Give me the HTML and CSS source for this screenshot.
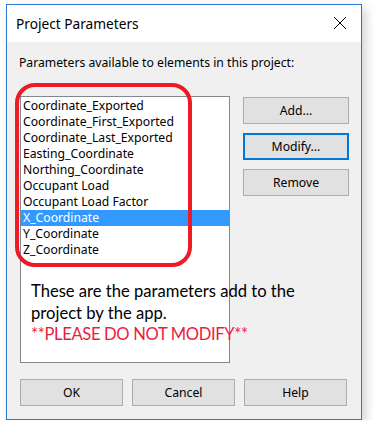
FILE: index.html
```html
<!DOCTYPE html>
<html lang="en">

<head>
    <meta charset="UTF-8">
    <meta name="viewport" content="width=device-width, initial-scale=1.0">
    <title>Project Parameters</title>
    <link rel="stylesheet" href="styles.css">
</head>

<body>
    <div class="dialog">
        <div class="titlebar">
            <span class="title">Project Parameters</span>
            <svg class="close" width="14" height="14" viewBox="0 0 14 14">
                <path d="M1 1 L13 13 M13 1 L1 13" stroke="#000" stroke-width="1" fill="none" />
            </svg>
        </div>

        <div class="content">
            <div class="label">Parameters available to elements in this project:</div>

            <div class="main">
                <div class="list-wrap">
                    <ul class="list">
                        <li>Coordinate_Exported</li>
                        <li>Coordinate_First_Exported</li>
                        <li>Coordinate_Last_Exported</li>
                        <li>Easting_Coordinate</li>
                        <li>Northing_Coordinate</li>
                        <li>Occupant Load</li>
                        <li>Occupant Load Factor</li>
                        <li class="selected">X_Coordinate</li>
                        <li>Y_Coordinate</li>
                        <li>Z_Coordinate</li>
                    </ul>
                    <div class="highlight"></div>
                    <div class="note">
                        These are the parameters add to the<br>
                        project by the app.<br>
                        <span class="warn">**PLEASE DO NOT MODIFY**</span>
                    </div>
                </div>

                <div class="side-buttons">
                    <button>Add...</button>
                    <button class="default">Modify...</button>
                    <button>Remove</button>
                </div>
            </div>

            <div class="footer">
                <button>OK</button>
                <button>Cancel</button>
                <button>Help</button>
            </div>
        </div>
    </div>
</body>

</html>
```

FILE: styles.css
```css
body {
    margin: 0;
    padding: 4px 0 0 6px;
    background-color: #fff;
    font-family: "Noto Sans", "Liberation Sans", sans-serif;
    font-size: 12.2px;
    color: #000;
}

.dialog {
    width: 356px;
    box-sizing: border-box;
    border: 1px solid #2a78d6;
    background-color: #f0f0f0;
    box-shadow: 4px 4px 10px rgba(0, 0, 0, 0.18);
}

.titlebar {
    height: 37px;
    background-color: #fff;
    display: flex;
    align-items: center;
    justify-content: space-between;
    padding: 0 14px 0 9px;
}

.title {
    font-family: "Noto Sans", sans-serif;
    font-size: 13.7px;
    color: #000;
    margin-top: -1px;
}

.close {
    display: block;
    margin-top: -2px;
}

.content {
    padding: 14px 12px 13px 12px;
}

.label {
    line-height: 14px;
}

.main {
    display: flex;
    margin-top: 26px;
    margin-left: 1px;
}

.list-wrap {
    position: relative;
}

.list {
    list-style: none;
    margin: 0;
    padding: 1px 0 0 0;
    width: 210px;
    height: 267px;
    box-sizing: border-box;
    border: 1px solid #828790;
    background-color: #fff;
}

.list li {
    height: 16px;
    line-height: 16px;
    padding-left: 2px;
    white-space: nowrap;
}

.list li.selected {
    background-color: #3399ff;
    color: #fff;
}

.highlight {
    position: absolute;
    left: -5px;
    top: -13px;
    width: 177px;
    height: 184px;
    box-sizing: border-box;
    border: 4px solid #ed1c24;
    border-radius: 20px;
}

.note {
    position: absolute;
    left: 11px;
    top: 185px;
    font-family: Lato, "Open Sans", sans-serif;
    font-size: 16.6px;
    line-height: 21.5px;
    white-space: nowrap;
    color: #000;
}

.warn {
    color: #ed1c3c;
    letter-spacing: -0.35px;
}

.side-buttons {
    display: flex;
    flex-direction: column;
    gap: 9px;
    margin-left: 13px;
    margin-top: 1px;
}

button {
    font-family: "Noto Sans", "Liberation Sans", sans-serif;
    font-size: 12.2px;
    color: #000;
    background-color: #e1e1e1;
    border: 1px solid #adadad;
    padding: 0;
    margin: 0;
}

.side-buttons button {
    width: 106px;
    height: 27px;
}

.side-buttons button.default {
    border: 2px solid #0078d7;
}

.footer {
    display: flex;
    gap: 9px;
    margin-top: 16px;
    margin-left: 1px;
}

.footer button {
    width: 103px;
    height: 27px;
}
```
